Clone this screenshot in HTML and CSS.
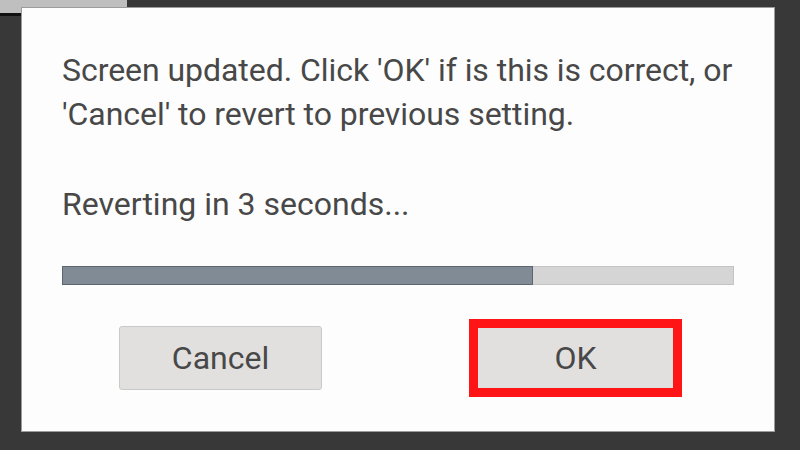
FILE: index.html
```html
<!DOCTYPE html>
<html lang="en">
<head>
  <meta charset="UTF-8" />
  <meta name="viewport" content="width=device-width, initial-scale=1.0" />
  <title>Screen updated</title>
  <link rel="stylesheet" href="styles.css">
</head>
<body>
  <!-- window behind the dialog -->
  <div class="behind"></div>
  <div class="behind-line"></div>

  <div class="dialog">
    <p class="message">Screen updated. Click 'OK' if is this is correct, or<br>'Cancel' to revert to previous setting.</p>

    <p class="countdown">Reverting in 3 seconds...</p>

    <div class="progress">
      <div class="progress-fill" style="width: 70%"></div>
    </div>

    <div class="buttons">
      <button class="btn">Cancel</button>
      <button class="btn highlight">OK</button>
    </div>
  </div>
</body>
</html>
```

FILE: styles.css
```css
body {
  margin: 0;
  width: 800px;
  height: 450px;
  background-color: #383838;
  font-family: Roboto, "Liberation Sans", sans-serif;
  position: relative;
  overflow: hidden;
}
.behind {
  position: absolute;
  left: 0;
  top: 0;
  width: 127px;
  height: 13px;
  background: #bfbfbf;
}
.behind-line {
  position: absolute;
  left: 0;
  top: 13px;
  width: 22px;
  height: 3px;
  background: #111;
}
.dialog {
  position: relative;
  box-sizing: border-box;
  margin: 7px 0 0 21px;
  width: 754px;
  height: 425px;
  background: #fdfdfd;
  border: 1px solid #9c9c9c;
  padding: 40px 40px 0 40px;
  color: #484848;
}
.message {
  margin: 0;
  font-size: 32px;
  line-height: 44px;
  white-space: nowrap;
  letter-spacing: -0.05px;
}
.countdown {
  margin: 46px 0 0;
  font-size: 32px;
  line-height: 44px;
}
.progress {
  margin-top: 40px;
  height: 19px;
  box-sizing: border-box;
  background: #d5d5d5;
  border: 1px solid #c4c4c4;
  display: flex;
}
.progress-fill {
  margin: -1px 0 -1px -1px;
  background: #808b96;
  border: 1px solid #5d6670;
}
.buttons {
  display: flex;
  justify-content: space-between;
  padding: 0 57px;
  margin-top: 41px;
}
.btn {
  position: relative;
  width: 203px;
  height: 64px;
  background: #e1e0de;
  border: 1px solid #c9c9c9;
  border-radius: 3px;
  font-family: Roboto, "Liberation Sans", sans-serif;
  font-size: 32px;
  color: #484848;
}
/* red frame drawn over the OK button */
.highlight::after {
  content: "";
  position: absolute;
  left: -6px;
  top: -8px;
  right: -6px;
  bottom: -8px;
  border: 9px solid #ff1515;
}
```
